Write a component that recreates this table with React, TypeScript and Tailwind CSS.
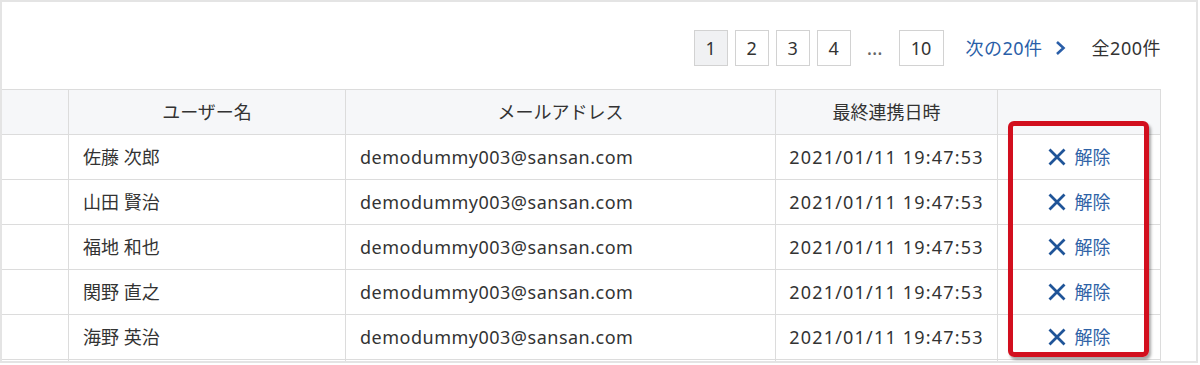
const rows = [
  { name: "佐藤 次郎" },
  { name: "山田 賢治" },
  { name: "福地 和也" },
  { name: "関野 直之" },
  { name: "海野 英治" },
];

const font = { fontFamily: '"Noto Sans", "Noto Sans CJK JP", sans-serif' };

const PageBox = ({ label, active, wide }: { label: string; active?: boolean; wide?: boolean }) => (
  <div
    className={
      "flex h-[36px] items-center justify-center border border-[#d2d2d2] text-[18px] text-[#333] " +
      (wide ? "w-[45px] " : "w-[34px] ") +
      (active ? "bg-[#f0f1f3]" : "bg-white")
    }
  >
    {label}
  </div>
);

const CloseIcon = () => (
  <svg width="18" height="18" viewBox="0 0 18 18">
    <path d="M1.5 1.5 L16.5 16.5 M16.5 1.5 L1.5 16.5" stroke="#1f5498" strokeWidth="2.8" fill="none" />
  </svg>
);

const App = () => {
  return (
    <div className="h-[365px] w-[1200px] bg-white" style={font}>
      <div className="relative h-[363px] w-[1198px] overflow-hidden border-2 border-[#e4e4e4]">
        {/* Pagination */}
        <div className="flex h-[87px] items-start justify-end pr-[35px] pt-[28px]">
          <div className="flex items-center">
            <div className="flex items-center gap-[7px]">
              <PageBox label="1" active />
              <PageBox label="2" />
              <PageBox label="3" />
              <PageBox label="4" />
            </div>
            <span className="mx-[16px] text-[20px] leading-none text-[#666]">…</span>
            <PageBox label="10" wide />
            <a className="ml-[22px] flex items-center text-[18px] tracking-[0.5px] text-[#2a5ea8]" href="#">
              次の20件
              <svg className="ml-[12px]" width="11" height="16" viewBox="0 0 11 16">
                <path d="M2 2 L8.5 8 L2 14" fill="none" stroke="#2a5ea8" strokeWidth="2.6" />
              </svg>
            </a>
            <span className="ml-[26px] text-[18px] tracking-[0.5px] text-[#333]">全200件</span>
          </div>
        </div>

        {/* Table */}
        <div className="w-[1159px] border-t border-[#dcdcdc] text-[18px] text-[#333]">
          <div className="grid grid-cols-[67px_277px_430px_222px_163px] bg-[#f6f7f9]">
            <div className="h-[45px] border-b border-r border-[#dcdcdc]" />
            <div className="flex h-[45px] items-center justify-center border-b border-r border-[#dcdcdc]">
              ユーザー名
            </div>
            <div className="flex h-[45px] items-center justify-center border-b border-r border-[#dcdcdc]">
              メールアドレス
            </div>
            <div className="flex h-[45px] items-center justify-center border-b border-r border-[#dcdcdc]">
              最終連携日時
            </div>
            <div className="h-[45px] border-b border-r border-[#dcdcdc]" />
          </div>
          {[...rows, { name: "" }].map((r, i) => (
            <div key={i} className="grid grid-cols-[67px_277px_430px_222px_163px]">
              <div className="h-[45px] border-b border-r border-[#dcdcdc]" />
              <div className="flex h-[45px] items-center border-b border-r border-[#dcdcdc] pl-[14px]">
                {r.name}
              </div>
              <div className="flex h-[45px] items-center border-b border-r border-[#dcdcdc] pl-[14px] tracking-[0.5px]">
                {r.name && "demodummy003@sansan.com"}
              </div>
              <div className="flex h-[45px] items-center justify-center border-b border-r border-[#dcdcdc] tracking-[1.2px]">
                {r.name && "2021/01/11 19:47:53"}
              </div>
              <div className="flex h-[45px] items-center justify-center border-b border-r border-[#dcdcdc]">
                {r.name && (
                  <button className="flex items-center gap-[9px] text-[#2f63a7]">
                    <CloseIcon />
                    解除
                  </button>
                )}
              </div>
            </div>
          ))}
        </div>

        {/* highlight */}
        <div className="absolute left-[1006px] top-[119px] h-[236px] w-[141px] rounded-[6px] border-[5px] border-[#d20f1e] shadow-[2px_3px_3px_rgba(0,0,0,0.35)]" />
      </div>
    </div>
  );
};

export default App;
